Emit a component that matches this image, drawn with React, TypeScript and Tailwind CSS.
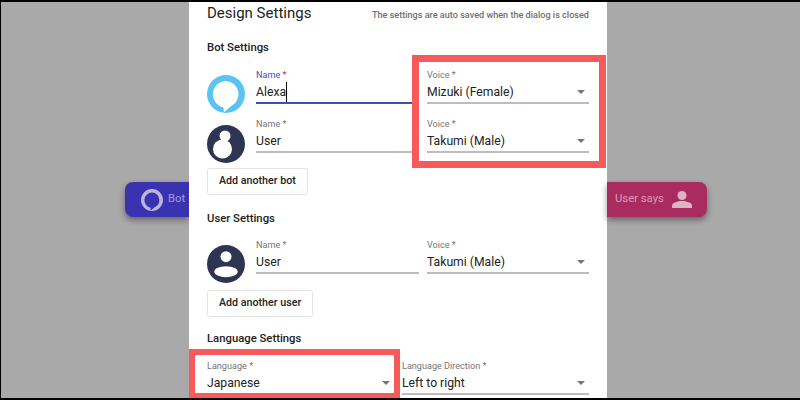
const Caret = () => (
  <svg viewBox="0 0 8 4" className="w-[8px] h-[4px] shrink-0 fill-[#757575]">
    <path d="M0 0h8L4 4z" />
  </svg>
);

const AlexaIcon = ({ color, size }: { color: string; size: number }) => (
  <svg viewBox="0 0 38 38" width={size} height={size} className="shrink-0">
    <path
      fillRule="evenodd"
      fill={color}
      d="M19 0a19 19 0 1 0 0 38a19 19 0 1 0 0-38zM19 6a13.300 13.300 0 0 0-2.600 26.300L17 37.200L23.500 31.500A13.300 13.300 0 0 0 19 6z"
    />
  </svg>
);

const SnowmanAvatar = () => (
  <svg viewBox="0 0 38 38" className="w-[38px] h-[38px] shrink-0 mt-[7px]">
    <circle cx="19" cy="19" r="19" fill="#2d3552" />
    <circle cx="18" cy="11" r="5.500" fill="#fff" />
    <circle cx="15.500" cy="24" r="9.500" fill="#fff" />
  </svg>
);

const UserAvatar = () => (
  <svg viewBox="0 0 38 38" className="w-[38px] h-[38px] shrink-0 mt-[6px]">
    <circle cx="19" cy="19" r="19" fill="#2d3552" />
    <circle cx="19" cy="11.700" r="5.500" fill="#fff" />
    <ellipse cx="19" cy="26.700" rx="11.700" ry="5.500" fill="#fff" />
  </svg>
);

interface FieldProps {
  label: string;
  value: string;
  select?: boolean;
  focused?: boolean;
}

const Field = ({ label, value, select, focused }: FieldProps) => (
  <div
    className={`h-[35px] flex flex-col border-b-2 ${
      focused ? "border-[#3f51b5]" : "border-[#bdbdbd]"
    }`}
  >
    <div className={`text-[9.1px] leading-[12px] ${focused ? "text-[#3f51b5]" : "text-[#757575]"}`}>
      {label} <span className={focused ? "text-[#c2185b]" : ""}>*</span>
    </div>
    <div className="mt-[1px] flex items-center justify-between pr-[4px] text-[12.2px] leading-[20px] text-[#222]">
      <span className={focused ? "border-r border-black" : ""}>{value}</span>
      {select && <Caret />}
    </div>
  </div>
);

const OutlineButton = ({ children }: { children: string }) => (
  <button
    type="button"
    className="block h-[27px] rounded-[3px] border border-[#e4e4e4] bg-white px-[11px] text-[10.7px] font-medium text-[#222] whitespace-nowrap"
  >
    {children}
  </button>
);

const SectionTitle = ({ children }: { children: string }) => (
  <h3 className="text-[11.3px] leading-[16px] font-medium text-[#222]">{children}</h3>
);

export default function App() {
  return (
    <div
      className="relative w-[800px] h-[400px] box-border border-y-2 border-l border-black bg-[#a9a9a9] pl-[124px] flex items-start overflow-hidden"
      style={{ fontFamily: "Roboto, sans-serif" }}
    >
      {/* left bubble, cut off by the dialog */}
      <div className="mt-[180px] h-[35px] w-[64px] shrink-0 overflow-hidden rounded-l-[8px] bg-[#3a33b0] shadow-[0_3px_6px_rgba(0,0,0,0.4)] flex items-center pl-[16px] gap-[5px]">
        <AlexaIcon color="#b9b6e0" size={22} />
        <span className="text-[11.3px] text-[#9f9bd8]">Bot</span>
      </div>

      {/* dialog */}
      <div className="w-[418px] h-[396px] shrink-0 overflow-hidden bg-white px-[18px]">
        <div className="flex items-baseline justify-between h-[22px]">
          <h2 className="text-[15px] leading-[22px] text-[#222]">Design Settings</h2>
          <span className="text-[9.1px] font-medium text-[#6f6f6f]">
            The settings are auto saved when the dialog is closed
          </span>
        </div>

        <div className="mt-[16px]">
          <SectionTitle>Bot Settings</SectionTitle>
        </div>
        <div className="mt-[13px] flex gap-[11px] items-start h-[44px]">
          <div className="mt-[6px]">
            <AlexaIcon color="#5bc3f1" size={38} />
          </div>
          <div className="flex-1 grid grid-cols-[163px_162px] gap-[8px]">
            <Field label="Name" value="Alexa" focused />
            <Field label="Voice" value="Mizuki (Female)" select />
          </div>
        </div>
        <div className="mt-[5px] flex gap-[11px] items-start h-[45px]">
          <SnowmanAvatar />
          <div className="flex-1 grid grid-cols-[163px_162px] gap-[8px]">
            <Field label="Name" value="User" />
            <Field label="Voice" value="Takumi (Male)" select />
          </div>
        </div>
        <div className="mt-[5px]">
          <OutlineButton>Add another bot</OutlineButton>
        </div>

        <div className="mt-[16px]">
          <SectionTitle>User Settings</SectionTitle>
        </div>
        <div className="mt-[12px] flex gap-[11px] items-start h-[44px]">
          <UserAvatar />
          <div className="flex-1 grid grid-cols-[163px_162px] gap-[8px]">
            <Field label="Name" value="User" />
            <Field label="Voice" value="Takumi (Male)" select />
          </div>
        </div>
        <div className="mt-[7px]">
          <OutlineButton>Add another user</OutlineButton>
        </div>

        <div className="mt-[14px]">
          <SectionTitle>Language Settings</SectionTitle>
        </div>
        <div className="mt-[13px] grid grid-cols-[187px_187px] gap-[8px]">
          <Field label="Language" value="Japanese" select />
          <Field label="Language Direction" value="Left to right" select />
        </div>
      </div>

      {/* right bubble */}
      <div className="mt-[180px] h-[35px] w-[100px] shrink-0 rounded-r-[8px] bg-[#a92b60] shadow-[0_3px_6px_rgba(0,0,0,0.4)] flex items-center pl-[8px] gap-[8px]">
        <span className="text-[11.3px] text-[#dc9db8] whitespace-nowrap">User says</span>
        <svg viewBox="0 0 20 20" className="w-[20px] h-[20px] shrink-0 fill-[#dcb4c6]">
          <circle cx="10" cy="5.500" r="4.500" />
          <path d="M0 18v-2.500C0 12.500 6 11 10 11s10 1.500 10 4.500V18z" />
        </svg>
      </div>

      {/* highlight boxes drawn over the screenshot */}
      <div className="absolute left-[411px] top-[53px] w-[194px] h-[113px] border-[7px] border-[#f65a5b]" />
      <div className="absolute left-[188px] top-[347px] w-[211px] h-[50px] border-[6px] border-[#f65a5b]" />
    </div>
  );
}
